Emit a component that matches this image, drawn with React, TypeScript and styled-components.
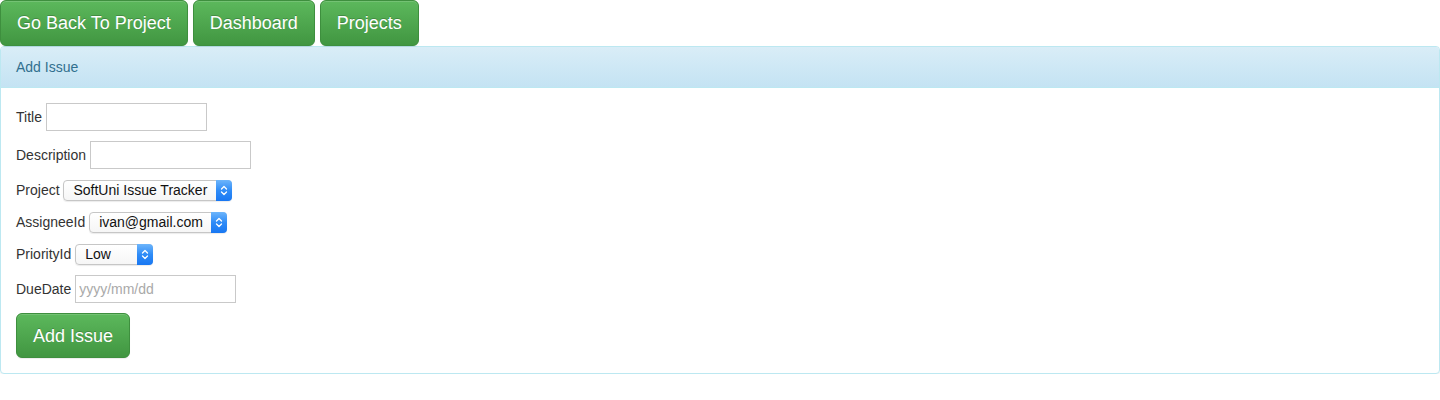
import React from "react";
import styled, { createGlobalStyle } from "styled-components";

const Global = createGlobalStyle`
  * { box-sizing: border-box; }
  html, body { margin: 0; padding: 0; background: #fff; }
  body {
    font-family: "Liberation Sans", Arial, Helvetica, sans-serif;
    font-size: 14px;
    line-height: 1.428571;
    color: #333;
  }
`;

const Page = styled.div`
  width: 1440px;
`;

const Toolbar = styled.div`
  display: flex;
  gap: 5px;
  height: 46px;
`;

const GreenButton = styled.button<{ $h?: number }>`
  font-family: "Liberation Sans", Arial, Helvetica, sans-serif;
  font-size: 18px;
  line-height: 24px;
  padding: 10px 16px;
  height: ${(p) => p.$h ?? 46}px;
  color: #fff;
  border: 1px solid #3e8f3e;
  border-radius: 6px;
  background-color: #5cb85c;
  background-image: linear-gradient(to bottom, #5cb85c 0%, #419641 100%);
  text-shadow: 0 -1px 0 rgba(0, 0, 0, 0.2);
  box-shadow: inset 0 1px 0 rgba(255, 255, 255, 0.15), 0 1px 1px rgba(0, 0, 0, 0.075);
  cursor: pointer;
  white-space: nowrap;
`;

const Panel = styled.div`
  border: 1px solid #bce8f1;
  border-radius: 4px;
  box-shadow: 0 1px 2px rgba(0, 0, 0, 0.05);
  background: #fff;
`;

const PanelHeading = styled.div`
  height: 41px;
  padding: 10px 15px;
  color: #31708f;
  font-size: 14px;
  line-height: 20px;
  border-bottom: 1px solid #bce8f1;
  border-radius: 3px 3px 0 0;
  background-image: linear-gradient(to bottom, #d9edf7 0%, #c4e3f3 100%);
`;

const PanelBody = styled.form`
  padding: 15px;
  display: flex;
  flex-direction: column;
  align-items: flex-start;
`;

const Row = styled.div<{ $h: number }>`
  display: flex;
  align-items: center;
  height: ${(p) => p.$h}px;
  margin-bottom: 10px;
  white-space: pre;
`;

const Label = styled.label`
  font-size: 14px;
  color: #333;
  font-weight: normal;
  padding-top: 2px;
`;

const TextInput = styled.input`
  width: 161px;
  height: 28px;
  border: 1px solid #c9c9c9;
  padding: 2px 3px;
  font-family: "Liberation Sans", Arial, Helvetica, sans-serif;
  font-size: 14px;
  color: #333;
  background: #fff;
  &::placeholder { color: #a9a9a9; }
`;

const SelectWrap = styled.span<{ $w: number }>`
  position: relative;
  display: inline-block;
  width: ${(p) => p.$w}px;
  height: 21px;
`;

const Select = styled.select`
  appearance: none;
  -webkit-appearance: none;
  width: 100%;
  height: 21px;
  margin: 0;
  padding: 0 18px 0 9px;
  font-family: "Liberation Sans", Arial, Helvetica, sans-serif;
  font-size: 14px;
  line-height: 19px;
  color: #111;
  background: linear-gradient(to bottom, #ffffff 0%, #f6f6f6 100%);
  border: 1px solid #c6c6c6;
  border-radius: 4px;
  box-shadow: 0 1px 1px rgba(0, 0, 0, 0.08);
`;

const Arrow = styled.span`
  position: absolute;
  top: 0;
  right: 0;
  width: 16px;
  height: 21px;
  border-radius: 0 4px 4px 0;
  background-image: linear-gradient(to bottom, #6db5fb 0%, #2f8cf7 50%, #1877f2 100%);
  display: flex;
  align-items: center;
  justify-content: center;
  pointer-events: none;
`;

const SubmitRow = styled.div`
  display: flex;
`;

function Chevrons() {
  return (
    <svg width="8" height="13" viewBox="0 0 8 13" fill="none">
      <path d="M1.5 5 L4 2.5 L6.5 5" stroke="#fff" strokeWidth="1.3" strokeLinecap="round" strokeLinejoin="round" />
      <path d="M1.5 8 L4 10.5 L6.5 8" stroke="#fff" strokeWidth="1.3" strokeLinecap="round" strokeLinejoin="round" />
    </svg>
  );
}

function NativeSelect({ width, options }: { width: number; options: string[] }) {
  return (
    <SelectWrap $w={width}>
      <Select defaultValue={options[0]}>
        {options.map((o) => (
          <option key={o}>{o}</option>
        ))}
      </Select>
      <Arrow>
        <Chevrons />
      </Arrow>
    </SelectWrap>
  );
}

export default function App() {
  return (
    <Page>
      <Global />
      <Toolbar>
        <GreenButton>Go Back To Project</GreenButton>
        <GreenButton>Dashboard</GreenButton>
        <GreenButton>Projects</GreenButton>
      </Toolbar>
      <Panel>
        <PanelHeading>Add Issue</PanelHeading>
        <PanelBody onSubmit={(e) => e.preventDefault()}>
          <Row $h={28}>
            <Label>Title </Label>
            <TextInput type="text" />
          </Row>
          <Row $h={28}>
            <Label>Description </Label>
            <TextInput type="text" />
          </Row>
          <Row $h={22}>
            <Label>Project </Label>
            <NativeSelect width={169} options={["SoftUni Issue Tracker"]} />
          </Row>
          <Row $h={22}>
            <Label>AssigneeId </Label>
            <NativeSelect width={138} options={["ivan@gmail.com"]} />
          </Row>
          <Row $h={22}>
            <Label>PriorityId </Label>
            <NativeSelect width={78} options={["Low", "Medium", "High"]} />
          </Row>
          <Row $h={28}>
            <Label>DueDate </Label>
            <TextInput type="text" placeholder="yyyy/mm/dd" />
          </Row>
          <SubmitRow>
            <GreenButton type="submit" $h={45}>Add Issue</GreenButton>
          </SubmitRow>
        </PanelBody>
      </Panel>
    </Page>
  );
}
